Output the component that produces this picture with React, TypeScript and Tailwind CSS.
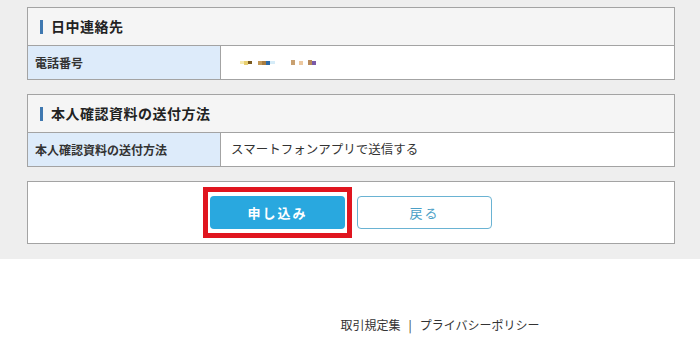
import React from "react";

const font = { fontFamily: '"Noto Sans CJK JP", "Noto Sans", sans-serif' };

function Section({ title, label, children }: { title: string; label: string; children: React.ReactNode }) {
  return (
    <div className="border border-[#a3a3a3] bg-white">
      <div className="flex h-[37px] items-center bg-[#f5f5f5] pl-[12px]">
        <span className="mr-[8px] h-[14px] w-[3px] bg-[#3f78b0]" />
        <span className="text-[14px] font-bold tracking-[0.5px] text-[#222]">{title}</span>
      </div>
      <div className="flex h-[34px] border-t border-[#a3a3a3]">
        <div className="flex w-[193px] items-center border-r border-[#a3a3a3] bg-[#ddebfa] pl-[7px] text-[12px] font-bold text-[#333]">
          {label}
        </div>
        <div className="flex flex-1 items-center pl-[10px] text-[12.5px] text-[#333]">{children}</div>
      </div>
    </div>
  );
}

function Pixels() {
  const cells: [string, number, number][] = [
    ["#f6eab0", 4, 3], ["#e8cf70", 4, 4], ["#7a5a20", 4, 3], ["transparent", 6, 3], ["#c49a5a", 4, 4], ["#a87c40", 4, 4], ["#2c6aa8", 4, 4], ["#d6ecf8", 5, 3],
    ["transparent", 16, 3], ["#c8a070", 4, 5], ["transparent", 4, 3], ["#ecc8a0", 4, 4], ["transparent", 5, 3], ["#b88a5a", 4, 5], ["#7a5aa8", 4, 4],
  ];
  return (
    <div className="ml-[9px] flex items-center">
      {cells.map(([c, w, h], i) => (
        <span key={i} className="inline-block" style={{ background: c, width: w, height: h }} />
      ))}
    </div>
  );
}

export default function App() {
  return (
    <div className="min-h-[343px] w-[700px] bg-white" style={font}>
      <div className="flex flex-col gap-[14px] bg-[#eeeeee] pb-[15px] pl-[27px] pr-[25px] pt-[7px]">
        <Section title="日中連絡先" label="電話番号">
          <Pixels />
        </Section>
        <Section title="本人確認資料の送付方法" label="本人確認資料の送付方法">
          スマートフォンアプリで送信する
        </Section>
        <div className="flex h-[63px] items-center justify-center gap-[5px] border border-[#a3a3a3] bg-white pr-[7px]">
          <div className="border-[5px] border-[#e0151f] bg-white px-[2px] py-[4px]">
            <button className="h-[33px] w-[135px] rounded-[4px] bg-[#29a8df] text-[13px] font-bold tracking-[2px] text-white">
              申し込み
            </button>
          </div>
          <button className="h-[33px] w-[135px] rounded-[4px] border border-[#6ab3d3] bg-white text-[13px] tracking-[2px] text-[#4b9fc6]">
            戻る
          </button>
        </div>
      </div>
      <div className="flex justify-center pl-[180px] pt-[57px] text-[12px] text-[#333]">
        <span>取引規定集</span>
        <span className="mx-[8px]">|</span>
        <span>プライバシーポリシー</span>
      </div>
    </div>
  );
}
